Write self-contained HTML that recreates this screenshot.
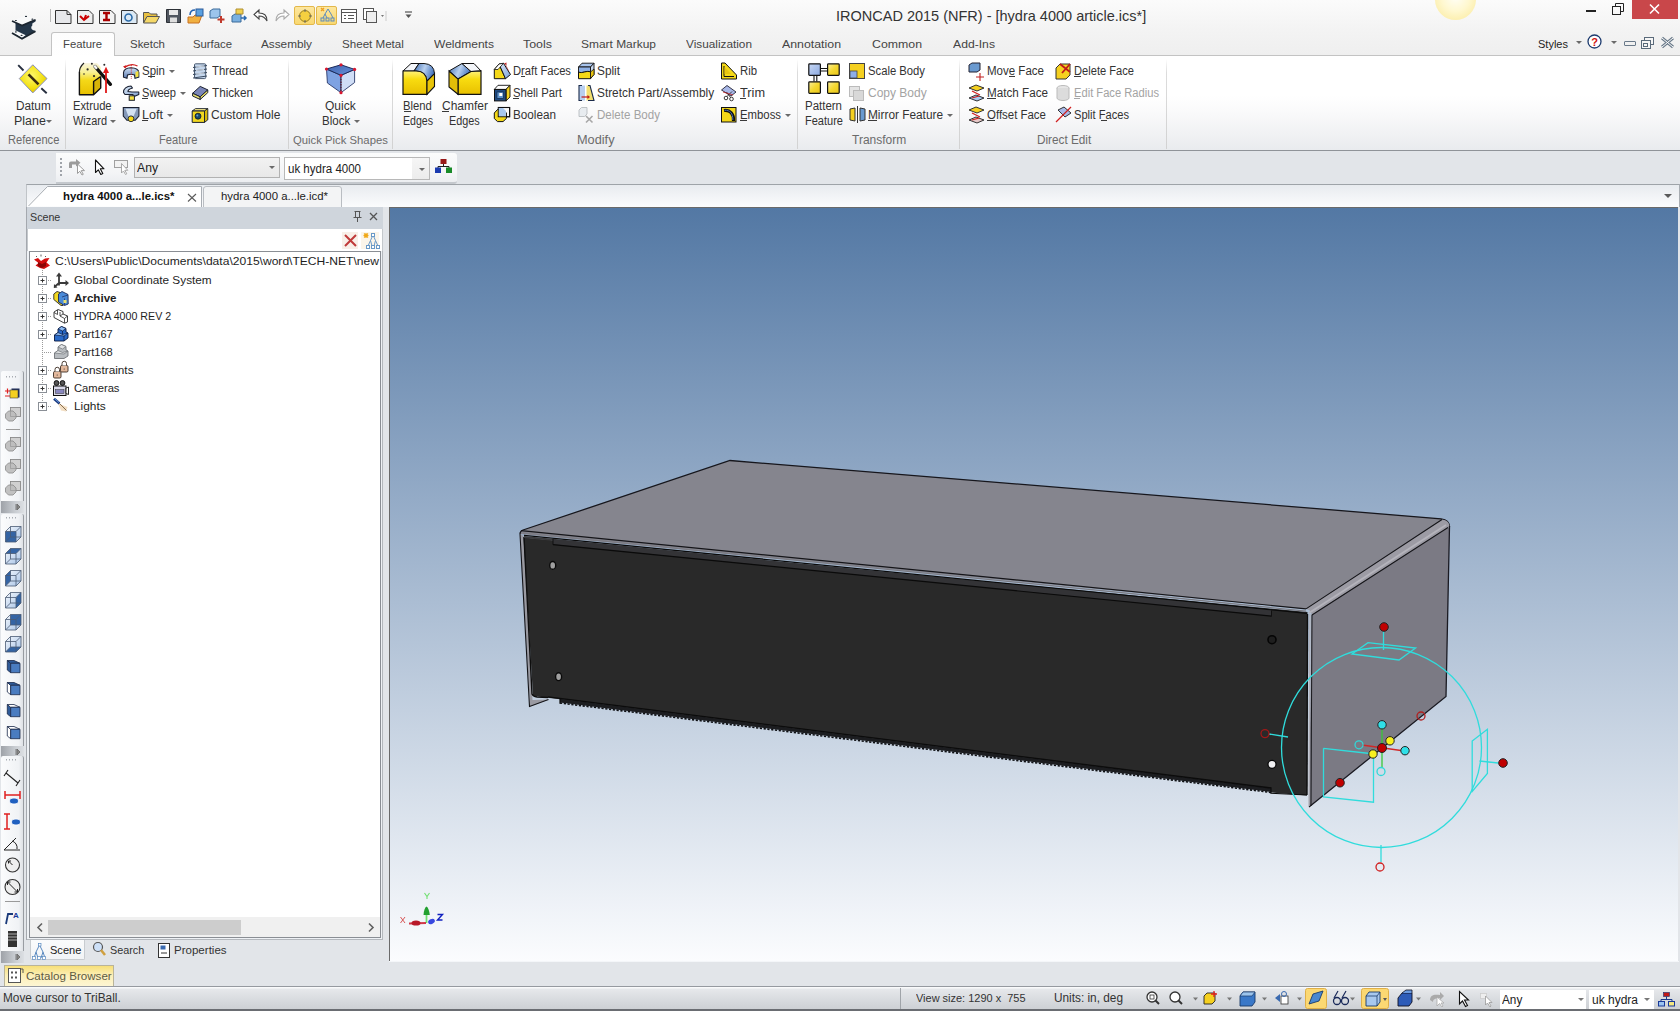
<!DOCTYPE html>
<html><head><meta charset="utf-8">
<style>
*{margin:0;padding:0;box-sizing:border-box}
html,body{width:1680px;height:1011px;overflow:hidden;background:#e2e5e9;font-family:"Liberation Sans",sans-serif;font-size:12px;color:#1e1e1e}
.a{position:absolute}
svg{position:absolute;overflow:visible}
.t{position:absolute;white-space:nowrap;line-height:14px}
#title{left:0;top:0;width:1680px;height:31px;background:linear-gradient(#fbfbfb,#f3f3f3)}
#tabs{left:0;top:31px;width:1680px;height:25px;background:linear-gradient(#f3f3f3,#efefef);border-bottom:1px solid #c3c3c3}
#ribbon{left:0;top:56px;width:1680px;height:95px;background:linear-gradient(#ffffff 0%,#ffffff 42%,#f9f9fa 62%,#f0f1f3 84%,#e9ebee 100%);border-bottom:1px solid #8f9398}
.sep{position:absolute;top:59px;width:1px;height:90px;background:linear-gradient(rgba(225,225,225,0),#dcdcdc 15%,#d2d2d2)}
.glab{position:absolute;top:133px;color:#6b6b6b;white-space:nowrap;line-height:14px}
.tab{position:absolute;top:37px;color:#454545;white-space:nowrap;font-size:12px;line-height:14px}
.rl{position:absolute;white-space:nowrap;line-height:14px;color:#333}
.dis{color:#a3a3a3}
.dd{position:absolute;width:0;height:0;border-left:3px solid transparent;border-right:3px solid transparent;border-top:3px solid #6a6a6a}
#viewport{left:389px;top:207px;width:1289px;height:754px;background:linear-gradient(#5378a4,#fbfcfe);border-left:1px solid #6a6a6a;border-top:1px solid #6a6a6a}
#status{left:0;top:986px;width:1680px;height:25px;background:linear-gradient(#f9fafb 0px,#f9fafb 1px,#e6e8eb 2px,#d6d9dd 60%,#cbced2 100%);border-top:1px solid #969aa0}
</style></head>
<body>
<!-- ===== TITLE BAR ===== -->
<div class="a" id="title"></div>
<div class="a" style="left:1435px;top:-21px;width:41px;height:41px;border-radius:50%;background:radial-gradient(circle at 50% 45%,#fffef6 0%,#fff8d0 45%,#fcefb0 75%,#f6e394 92%,rgba(246,230,160,.4) 100%)"></div>
<!-- app logo -->
<svg style="left:0;top:0;z-index:5" width="40" height="42">
 <path d="M15.5 22.5 L22 25 L35.5 19.5 L35.5 21.5 L32.3 23.5 L32.3 25.5 A2.6 2.6 0 0 0 33.5 30.2 L35.5 31 L22 38.5 L15.5 35 Z" fill="#243648"/>
 <path d="M12 21 L25.7 15.3 L35.5 19.6 L22 25 Z" fill="#f8f9fa"/>
 <path d="M12 21 L22 25.6 L35.5 19.8" stroke="#1c2630" stroke-width="1.7" fill="none" stroke-linejoin="round"/>
 <path d="M12 32.5 L15.9 30.6 L25.7 35.3 L21.9 38 Z" fill="#f8f9fa"/>
 <path d="M12 33 L22 38.8 L35.5 31.2" stroke="#1c2630" stroke-width="1.8" fill="none" stroke-linejoin="round"/>
 <g fill="#1c2630"><ellipse cx="26" cy="16.4" rx="1.1" ry=".6"/><ellipse cx="15.9" cy="20.5" rx="1.1" ry=".6"/><ellipse cx="32.4" cy="19.2" rx="1" ry=".6"/><ellipse cx="15.9" cy="31.9" rx="1" ry=".6"/><ellipse cx="21.6" cy="35.3" rx="1.1" ry=".6"/></g>
</svg>
<div class="a" style="left:50px;top:9px;width:1px;height:13px;background:#b8b8b8"></div>
<!-- QAT icons -->
<svg style="left:55px;top:10px" width="17" height="14"><path d="M0.5 0.5H12L16 4.5V13.5H0.5Z" fill="#e6e7ea" stroke="#333" stroke-width="1"/><path d="M12 0.5V4.5H16" fill="none" stroke="#333"/></svg>
<svg style="left:77px;top:10px" width="17" height="14"><path d="M0.5 0.5H12L16 4.5V13.5H0.5Z" fill="#eee" stroke="#333"/><path d="M3 6 L7 10 L12 6 M7 10 L9 5" stroke="#c00" stroke-width="2" fill="none"/></svg>
<svg style="left:99px;top:10px" width="17" height="14"><path d="M0.5 0.5H12L16 4.5V13.5H0.5Z" fill="#f3f3f3" stroke="#333"/><path d="M4 3H11M4 10H11M7.5 3V10" stroke="#a00" stroke-width="2.4" fill="none"/></svg>
<svg style="left:121px;top:10px" width="17" height="14"><path d="M0.5 0.5H12L16 4.5V13.5H0.5Z" fill="#dbe9f5" stroke="#333"/><circle cx="7.5" cy="7.5" r="3.5" fill="none" stroke="#2a6aa8" stroke-width="1.6"/></svg>
<svg style="left:143px;top:10px" width="17" height="14"><path d="M0.5 2.5H6L7.5 4H14V7H4L0.5 13Z" fill="#e8c040" stroke="#555"/><path d="M0.5 13L4 6.5H16.5L13 13Z" fill="#f5d868" stroke="#555"/></svg>
<svg style="left:166px;top:9px" width="15" height="14"><path d="M0.5 0.5H14.5V13.5H0.5Z" fill="#50565f" stroke="#2c3036"/><rect x="3" y="1" width="9" height="5" fill="#e8e8e8"/><rect x="4" y="8.5" width="7" height="5" fill="#dedede"/></svg>
<svg style="left:187px;top:8px" width="17" height="16"><path d="M1 9 L6 9 L8 7 L15 7 L12 15 L1 15Z" fill="#f0b040" stroke="#c87020"/><rect x="9" y="1" width="7" height="7" fill="#5aa0e0" stroke="#2a5a9a"/><path d="M3 7 Q3 2 8 2" stroke="#2060b0" stroke-width="1.5" fill="none"/></svg>
<svg style="left:209px;top:8px" width="17" height="16"><path d="M1 3 L4 1 L11 1 L11 8 L8 10 L1 10Z" fill="#9cc4ec" stroke="#3a6a9a"/><path d="M12 8 V15 M8.5 11.5 H15.5" stroke="#c0392b" stroke-width="2"/></svg>
<svg style="left:231px;top:8px" width="17" height="16"><path d="M1 8 L4 6 L10 6 L10 14 L1 14Z" fill="#7ab0e0" stroke="#3a6a9a"/><path d="M5 1 H12 V6 H5Z" fill="#f0d050" stroke="#b09030"/><path d="M10 10 H15 M13 8 L15 10 L13 12" stroke="#2a6ab0" stroke-width="1.5" fill="none"/></svg>
<svg style="left:253px;top:9px" width="16" height="13"><path d="M6 1 L1 5.5 L6 10 V7 C10 7 12 8 14 12 C14 6 11 4 6 4Z" fill="#fff" stroke="#444" stroke-width="1.1"/></svg>
<svg style="left:274px;top:9px" width="16" height="13"><path d="M10 1 L15 5.5 L10 10 V7 C6 7 4 8 2 12 C2 6 5 4 10 4Z" fill="#fff" stroke="#aaa" stroke-width="1.1"/></svg>
<div class="a" style="left:294px;top:6px;width:21px;height:19px;background:linear-gradient(#fde7a0,#f9d870);border:1px solid #e3b84a;border-radius:2px"></div>
<svg style="left:297px;top:8px" width="16" height="16"><circle cx="8" cy="8" r="5.5" fill="#f5d040" stroke="#9a8020"/><path d="M8 1 V4 M8 12 V15 M1 8 H4 M12 8 H15" stroke="#6a6a6a"/></svg>
<div class="a" style="left:316px;top:6px;width:21px;height:19px;background:linear-gradient(#fde7a0,#f9d870);border:1px solid #e3b84a;border-radius:2px"></div>
<svg style="left:319px;top:7px" width="16" height="17"><path d="M9 2 L6 7 L4 11 M9 2 L12 7 L14 11 M6 7 L8 11" stroke="#5a8ac0" fill="none"/><rect x="2" y="11" width="3" height="3" fill="none" stroke="#5a8ac0"/><rect x="7" y="11" width="3" height="3" fill="none" stroke="#5a8ac0"/><rect x="12" y="11" width="3" height="3" fill="none" stroke="#5a8ac0"/><path d="M2 1 L5 4 M5 1 L2 4" stroke="#f0a020" stroke-width="1.3"/></svg>
<svg style="left:341px;top:9px" width="16" height="14"><rect x="0.5" y="0.5" width="15" height="13" fill="#fff" stroke="#555"/><path d="M0.5 3.5H15.5" stroke="#555"/><path d="M3 6.5H5M7 6.5H13M3 9.5H5M7 9.5H13" stroke="#555"/></svg>
<svg style="left:363px;top:8px" width="24" height="16"><rect x="0.5" y="0.5" width="10" height="11" fill="#fff" stroke="#555"/><rect x="3.5" y="3.5" width="10" height="11" fill="#eee" stroke="#555"/><path d="M18 7 L21 7 L19.5 9Z" fill="#777"/><path d="M23 3V13" stroke="#ccc"/></svg>
<svg style="left:404px;top:11px" width="9" height="9"><path d="M1 1H8" stroke="#555" stroke-width="1.2"/><path d="M1.5 3.5H7.5L4.5 7Z" fill="#555"/></svg>
<div class="t" style="left:836px;top:8px;font-size:14.5px;line-height:17px;color:#333">IRONCAD 2015 (NFR) - [hydra 4000 article.ics*]</div>
<!-- window buttons -->
<div class="a" style="left:1586px;top:10px;width:10px;height:2px;background:#222"></div>
<svg style="left:1612px;top:3px" width="12" height="12"><rect x="0.5" y="3.5" width="8" height="8" fill="none" stroke="#222"/><path d="M3.5 3.5V0.5H11.5V8.5H8.5" fill="none" stroke="#222"/></svg>
<div class="a" style="left:1632px;top:0px;width:46px;height:19px;background:#c9474a"></div>
<svg style="left:1649px;top:4px" width="11" height="10"><path d="M1 0.5 L10 9.5 M10 0.5 L1 9.5" stroke="#fff" stroke-width="1.6"/></svg>

<!-- ===== RIBBON TABS ===== -->
<div class="a" id="tabs"></div>
<div class="a" style="left:51px;top:32px;width:64px;height:25px;background:linear-gradient(#fdfdfd,#ffffff);border:1px solid #c3c3c3;border-bottom:none;border-radius:3px 3px 0 0"></div>
<div class="tab" style="left:63px;font-size:11.6px;transform:scaleX(0.976);transform-origin:0 0">Feature</div>
<div class="tab" style="left:130px;font-size:11.6px;transform:scaleX(0.987);transform-origin:0 0">Sketch</div>
<div class="tab" style="left:193px;font-size:11.6px;transform:scaleX(0.976);transform-origin:0 0">Surface</div>
<div class="tab" style="left:261px;font-size:11.6px;transform:scaleX(1.015);transform-origin:0 0">Assembly</div>
<div class="tab" style="left:342px;font-size:11.6px">Sheet Metal</div>
<div class="tab" style="left:434px;font-size:11.6px;transform:scaleX(1.038);transform-origin:0 0">Weldments</div>
<div class="tab" style="left:523px;font-size:11.6px;transform:scaleX(1.071);transform-origin:0 0">Tools</div>
<div class="tab" style="left:581px;font-size:11.8px;transform:scaleX(1.012);transform-origin:0 0">Smart Markup</div>
<div class="tab" style="left:686px;font-size:11.6px;transform:scaleX(1.017);transform-origin:0 0">Visualization</div>
<div class="tab" style="left:782px;font-size:11.6px;transform:scaleX(1.064);transform-origin:0 0">Annotation</div>
<div class="tab" style="left:872px;font-size:11.6px;transform:scaleX(1.063);transform-origin:0 0">Common</div>
<div class="tab" style="left:953px;font-size:11.6px;transform:scaleX(1.051);transform-origin:0 0">Add-Ins</div>
<div class="tab" style="left:1538px;font-size:11.6px;color:#222;transform:scaleX(0.950);transform-origin:0 0">Styles</div>
<div class="dd" style="left:1576px;top:41px"></div>
<svg style="left:1587px;top:34px" width="15" height="15"><circle cx="7.5" cy="7.5" r="6.5" fill="#fff" stroke="#1d3b6e" stroke-width="1.3"/><text x="7.5" y="11.5" font-size="11" font-weight="bold" fill="#d01010" text-anchor="middle" font-family="Liberation Sans">?</text></svg>
<div class="dd" style="left:1611px;top:41px"></div>
<div class="a" style="left:1624px;top:41px;width:12px;height:5px;border:1px solid #6a7a8a;border-radius:1px"></div>
<svg style="left:1641px;top:37px" width="13" height="12"><rect x="3.5" y="0.5" width="9" height="7" fill="#f6f6f6" stroke="#5a6a7a"/><rect x="0.5" y="3.5" width="9" height="8" fill="#f6f6f6" stroke="#5a6a7a"/><rect x="2.5" y="6.5" width="4" height="3" fill="none" stroke="#5a6a7a"/></svg>
<svg style="left:1661px;top:37px" width="13" height="11"><path d="M1 1 L12 10 M12 1 L1 10" stroke="#6a7a8a" stroke-width="3"/><path d="M1 1 L12 10 M12 1 L1 10" stroke="#fff" stroke-width="1"/></svg>

<!-- ===== RIBBON ===== -->
<div class="a" id="ribbon"></div>
<div class="a" style="left:52px;top:55px;width:62px;height:2px;background:#fff"></div>

<div class="sep" style="left:65px"></div>
<div class="sep" style="left:288px"></div>
<div class="sep" style="left:392px"></div>
<div class="sep" style="left:797px"></div>
<div class="sep" style="left:959px"></div>
<div class="sep" style="left:1166px"></div>
<div class="glab" style="left:8px;transform:scaleX(0.928);transform-origin:0 0">Reference</div>
<div class="glab" style="left:159px;transform:scaleX(0.928);transform-origin:0 0">Feature</div>
<div class="glab" style="left:293px;font-size:11.6px;transform:scaleX(0.975);transform-origin:0 0">Quick Pick Shapes</div>
<div class="glab" style="left:577px;transform:scaleX(1.061);transform-origin:0 0">Modify</div>
<div class="glab" style="left:852px">Transform</div>
<div class="glab" style="left:1037px;transform:scaleX(0.980);transform-origin:0 0">Direct Edit</div>

<!-- Datum plane -->
<svg style="left:0;top:0" width="60" height="100">
 <defs><radialGradient id="dp" cx=".45" cy=".4" r=".7"><stop offset="0" stop-color="#fff870"/><stop offset=".6" stop-color="#f2e010"/><stop offset="1" stop-color="#d8b800"/></radialGradient></defs>
 <path d="M18.2 65.1 L23.5 70.5 M41.3 88.2 L46.7 93.2" stroke="#283040" stroke-width="1.9"/>
 <path d="M32.8 64.8 L47 78.6 L32.8 92.9 L19.3 78.6Z" fill="url(#dp)" stroke="#8a90c0" stroke-width="1"/>
 <path d="M28.5 74.4 L38.5 84.3" stroke="#3a2c10" stroke-width="2.6"/>
</svg>
<div class="rl" style="left:16px;top:99px;transform:scaleX(0.982);transform-origin:0 0">Datum</div>
<div class="rl" style="left:14px;top:114px;transform:scaleX(1.036);transform-origin:0 0">Plane</div><div class="dd" style="left:46px;top:120px"></div>
<!-- Extrude wizard -->
<svg style="left:0;top:0" width="120" height="100">
 <defs><linearGradient id="ew" x1="0" y1="0" x2="0" y2="1"><stop offset="0" stop-color="#f8f4e0"/><stop offset=".3" stop-color="#f8f090"/><stop offset=".55" stop-color="#f4d818"/><stop offset="1" stop-color="#e8c000"/></linearGradient></defs>
 <path d="M79.4 68 L84 63 L97 63 L100.7 67 L100.7 88 L93.6 94.7 L79.4 94.7 Z" fill="url(#ew)"/>
 <path d="M93.6 81.5 L100.7 76.5 L100.7 88 L93.6 94.7 Z" fill="#d8b408"/>
 <path d="M79.4 72 V94.7 H93.6 L100.7 88 V76.5 M93.6 94.7 V81.5 L100.7 76.5" stroke="#111" stroke-width="1.4" fill="none" stroke-linejoin="round"/>
 <path d="M79.4 72 Q79.5 67 84 63" stroke="#222" stroke-width="1.2" fill="none"/>
 <g fill="#2a2a2a"><circle cx="87.6" cy="69.4" r="1.1"/><circle cx="94" cy="76.1" r="1.1"/><circle cx="104.3" cy="64.8" r="1"/><circle cx="91.9" cy="63.7" r="1"/><circle cx="84" cy="74" r=".8"/></g>
 <path d="M95 66.5 L110.4 84.3" stroke="#111" stroke-width="3.4" stroke-linecap="round"/>
 <path d="M94.2 65.6 L97 68.8" stroke="#f8f8f8" stroke-width="2.4"/>
 <path d="M106 93 V71" stroke="#e01818" stroke-width="1.8"/>
 <path d="M103 73 L106 66.8 L109 73Z" fill="#e01818"/>
</svg>
<div class="rl" style="left:73px;top:99px;transform:scaleX(0.933);transform-origin:0 0">Extrude</div>
<div class="rl" style="left:73px;top:114px;transform:scaleX(0.910);transform-origin:0 0">Wizard</div><div class="dd" style="left:110px;top:120px"></div>

<!-- small col 1 -->
<svg style="left:0;top:0" width="300" height="130">
 <defs><linearGradient id="bg1" x1="0" y1="0" x2="0" y2="1"><stop offset="0" stop-color="#cfe0f4"/><stop offset="1" stop-color="#5a7ab0"/></linearGradient>
 <linearGradient id="bg2" x1="0" y1="0" x2="1" y2="1"><stop offset="0" stop-color="#e0ecf8"/><stop offset="1" stop-color="#7a9acb"/></linearGradient></defs>
 <!-- spin -->
 <path d="M123.5 72.5 Q124 68 131 67.8 Q138.5 68 138.8 72.5 L138.8 77.2 L135 78.2 L134.5 75 Q131 73.5 127.5 75 L127 78.2 L123.5 77.2 Z" fill="url(#bg1)" stroke="#1a2030" stroke-width="1.1"/>
 <path d="M135.5 72 L138.5 71 L138.5 76.5 L135.5 77.5Z" fill="#f5e040"/>
 <path d="M124.5 67.5 Q131 62.5 137.5 66" stroke="#d02020" stroke-width="1.3" fill="none"/>
 <path d="M123 66.5 L126.5 65 L125.5 68.5Z" fill="#d02020"/>
 <path d="M131.3 65 V79" stroke="#d02020" stroke-width=".8" stroke-dasharray="1.2 1"/>
 <!-- sweep -->
 <path d="M131 86 C127 86 123 89 123.5 92.5 L125 94.5 L133 94.5 L133 97 L138.8 94.5 L138.8 92 L132 92 L128 91.5 C128 89 131 88.5 132.5 88 Z" fill="url(#bg2)" stroke="#1a2030" stroke-width="1.1" stroke-linejoin="round"/>
 <rect x="129.2" y="95.8" width="5.2" height="4.5" fill="#f5e040" stroke="#1a2030" stroke-width="1"/>
 <!-- loft -->
 <path d="M123.3 107.5 H138.9 V116 L135.2 120.3 H126.9 L123.3 116 Z" fill="#8498b8" stroke="#1a2030" stroke-width="1.1"/>
 <path d="M125.5 108.8 H136.7 L133.5 116.5 H128.5 Z" fill="#d4e2f2"/>
 <circle cx="131" cy="118.8" r="2.9" fill="#f5d818" stroke="#1a2030" stroke-width=".9"/>
 <!-- thread -->
 <rect x="194.5" y="63.8" width="11.2" height="14.8" rx="1" fill="#c4d6ec" stroke="#4a5a70" stroke-width="1"/>
 <path d="M193 67.5 L207 65.5 M193 71 L207 69 M193 74.5 L207 72.5 M193 78 L207 76" stroke="#3a4a60" stroke-width="1"/>
 <path d="M196 67 L204 66 M196 70.5 L204 69.5 M196 74 L204 73" stroke="#f4f8fc" stroke-width=".8"/>
 <!-- thicken -->
 <path d="M192.6 93.3 L200.2 86.4 L207.8 89.9 L200.2 96.8 Z" fill="#7a86b8" stroke="#1a2030" stroke-width="1"/>
 <path d="M192.6 93.3 L200.2 96.8 L200.2 99.5 L192.6 96 Z" fill="#e8e070" stroke="#1a2030" stroke-width="1"/>
 <path d="M200.2 96.8 L207.8 89.9 L207.8 92.6 L200.2 99.5 Z" fill="#f0e468" stroke="#1a2030" stroke-width="1"/>
 <!-- custom hole -->
 <path d="M192.2 111 L195.5 108.6 L207.8 108.6 L204.5 111 Z" fill="#f8ec90" stroke="#1a2030" stroke-width=".9"/>
 <path d="M192.2 111 H204.5 V122.4 H192.2 Z" fill="#f2d820" stroke="#1a2030" stroke-width="1"/>
 <path d="M204.5 111 L207.8 108.6 V119.8 L204.5 122.4 Z" fill="#d8b808" stroke="#1a2030" stroke-width=".9"/>
 <circle cx="198" cy="116.2" r="3" fill="#1a4a6a" stroke="#101820" stroke-width=".8"/>
 <circle cx="197.3" cy="115.6" r="1" fill="#6aa0c8"/>
</svg>
<div class="rl" style="left:142px;top:64px;transform:scaleX(0.957);transform-origin:0 0">Spin</div><div class="dd" style="left:169px;top:70px"></div>
<div class="rl" style="left:142px;top:86px;transform:scaleX(0.926);transform-origin:0 0">Sweep</div><div class="dd" style="left:180px;top:92px"></div>
<div class="rl" style="left:142px;top:108px;transform:scaleX(1.049);transform-origin:0 0">Loft</div><div class="dd" style="left:167px;top:114px"></div>
<div class="rl" style="left:212px;top:64px;transform:scaleX(0.947);transform-origin:0 0">Thread</div>
<div class="rl" style="left:212px;top:86px;transform:scaleX(0.975);transform-origin:0 0">Thicken</div>
<div class="rl" style="left:211px;top:108px">Custom Hole</div>

<!-- quick block -->
<svg style="left:0;top:0" width="400" height="100">
 <defs><linearGradient id="qbt" x1="0" y1="0" x2="1" y2="1"><stop offset="0" stop-color="#3e64b0"/><stop offset="1" stop-color="#6a90d8"/></linearGradient></defs>
 <path d="M326.5 69 L341 75.3 L341 92.7 L327.4 83 Z" fill="#7ea2e2" stroke="#2a3a6a" stroke-width=".9"/>
 <path d="M341 75.3 L354.6 69.4 L354.6 82.5 L341 92.7 Z" fill="#d0def6" stroke="#2a3a6a" stroke-width=".9"/>
 <path d="M326.5 69 L341 64.8 L354.6 69.4 L341 75.3 Z" fill="url(#qbt)" stroke="#1a2a5a" stroke-width="1"/>
 <path d="M341 76 V92" stroke="#5a1020" stroke-width="1.1" stroke-dasharray="1.5 1.2"/>
 <g fill="#d81830"><circle cx="326.5" cy="69" r="1.6"/><circle cx="341" cy="64.8" r="1.6"/><circle cx="354.6" cy="69.4" r="1.6"/><circle cx="341" cy="75.3" r="1.6"/><circle cx="341" cy="92.7" r="1.6"/></g>
</svg>
<div class="rl" style="left:325px;top:99px">Quick</div>
<div class="rl" style="left:322px;top:114px;transform:scaleX(0.961);transform-origin:0 0">Block</div><div class="dd" style="left:354px;top:120px"></div>

<!-- blend / chamfer -->
<svg style="left:0;top:0" width="500" height="100">
 <defs><linearGradient id="bl" x1="0" y1="0" x2="1" y2="0.3"><stop offset="0" stop-color="#3a68b0"/><stop offset=".55" stop-color="#b8d0ee"/><stop offset="1" stop-color="#4a78c0"/></linearGradient>
 <linearGradient id="yl" x1="0" y1="0" x2="0" y2="1"><stop offset="0" stop-color="#fff27a"/><stop offset=".35" stop-color="#f8dc10"/><stop offset="1" stop-color="#e8c000"/></linearGradient></defs>
 <path d="M403 71 L411 63.5 L419 63.5 L414 71 Z" fill="#f4f6fa" stroke="#111" stroke-width="1"/>
 <path d="M414 71 L419 63.5 L424 63.5 Q434 64 434.5 73.5 L427 81 Q426 71 416 71 Z" fill="url(#bl)" stroke="#111" stroke-width="1"/>
 <path d="M403 71 L416 71 Q426 71 427 81 L427 94.3 L403 94.3 Z" fill="url(#yl)" stroke="#111" stroke-width="1.2"/>
 <path d="M427 81 L434.5 73.5 L434.5 86.5 L427 94.3 Z" fill="#e8c408" stroke="#111" stroke-width="1.1"/>
 <path d="M449 71 L462 63.5 L471 71.5 L458 79 Z" fill="url(#bl)" stroke="#111" stroke-width="1"/>
 <path d="M462 63.5 L474 63.5 L481 71 L471 71.5 Z" fill="#f4f6fa" stroke="#111" stroke-width="1"/>
 <path d="M458 79 L471 71.5 L481 71 L481 94.3 L458 94.3 Z" fill="url(#yl)" stroke="#111" stroke-width="1.2"/>
 <path d="M449 71 L458 79 L458 94.3 L449 87 Z" fill="#e2be08" stroke="#111" stroke-width="1.1"/>
</svg>
<div class="rl" style="left:403px;top:99px;transform:scaleX(0.938);transform-origin:0 0">Blend</div>
<div class="rl" style="left:403px;top:114px;transform:scaleX(0.884);transform-origin:0 0">Edges</div>
<div class="rl" style="left:442px;top:99px">Chamfer</div>
<div class="rl" style="left:449px;top:114px;transform:scaleX(0.902);transform-origin:0 0">Edges</div>

<!-- modify small icons -->
<svg style="left:0;top:0" width="800" height="130">
 <defs><linearGradient id="lb" x1="0" y1="0" x2="1" y2="1"><stop offset="0" stop-color="#dce8f8"/><stop offset="1" stop-color="#7aa0d8"/></linearGradient></defs>
 <!-- draft faces -->
 <path d="M494.3 69.5 L499 64 L505.5 78.7 H494.3Z" fill="#f4d818" stroke="#111" stroke-width="1"/>
 <path d="M499 64 L503.5 63.3 L510.5 74.5 L505.5 78.7Z" fill="url(#lb)" stroke="#111" stroke-width="1"/>
 <path d="M494.3 69.5 L499 64 L503.5 63.3 L498 69.5Z" fill="#fff" stroke="#111" stroke-width=".8"/>
 <path d="M508.5 70.5 L505.5 64.5" stroke="#c02828" stroke-width=".9" stroke-dasharray="1.2 1"/>
 <path d="M504 63.5 L506.5 62.5 L506.5 65.5Z" fill="#c02828"/>
 <!-- shell part -->
 <path d="M494.3 89.4 L498 85.3 H510 L506 89.4Z" fill="#fff" stroke="#111" stroke-width=".9"/>
 <path d="M506 89.4 L510 85.3 V97 L506 100.9Z" fill="#f0d020" stroke="#111" stroke-width=".9"/>
 <rect x="494.5" y="89.5" width="11.5" height="11.4" fill="#1e4a80" stroke="#111" stroke-width="1"/>
 <rect x="497" y="92" width="6.5" height="6.3" fill="#5a90c8" stroke="#0a2040" stroke-width=".6"/>
 <rect x="499.3" y="93" width="3" height="3" fill="#fff"/>
 <!-- boolean -->
 <path d="M497.5 109.5 H503 L506.4 113 V118.5 L503 121.6 H497.5 L494.3 118.5 V113Z" fill="#f4d818" stroke="#111" stroke-width="1"/>
 <rect x="498.3" y="107.5" width="11.3" height="9.2" fill="none" stroke="#111" stroke-width="1.1"/>
 <path d="M498.8 108 H503 L506 111 V116.2 H498.8Z" fill="#a8c8f0"/>
 <path d="M498.3 107.5 H509.6 V116.7 H506.4" fill="none" stroke="#111" stroke-width="1.1"/>
 <!-- split -->
 <path d="M578.5 67 L582 63.2 H594 L590.5 67Z" fill="#a8c4ec" stroke="#111" stroke-width=".9"/>
 <path d="M578.5 67 H590.5 V72 C587 70 582 74 578.5 72Z" fill="#8eb0e4" stroke="#111" stroke-width=".9"/>
 <path d="M578.5 72 C582 74 587 70 590.5 72 V78.7 H578.5Z" fill="#f4d818" stroke="#111" stroke-width="1"/>
 <path d="M590.5 67 L594 63.2 V74.5 L590.5 78.7Z" fill="#c8d8f0" stroke="#111" stroke-width=".9"/>
 <path d="M590.5 72 L594 69 V74.5 L590.5 78.7Z" fill="#e8c410" stroke="#111" stroke-width=".8"/>
 <!-- stretch -->
 <rect x="579" y="85.5" width="6" height="15" fill="#b8cff0"/>
 <path d="M586.5 85.5 H590 L594 100.5 H586.5Z" fill="#f4e070"/>
 <path d="M582 85.5 H579 V100.5 H582 M588 85.5 H590 L594 100.5 H588" fill="none" stroke="#1a2a4a" stroke-width="1.1"/>
 <path d="M581.5 97 H588" stroke="#c01818" stroke-width="1.2"/>
 <path d="M587.5 95 L590 97 L587.5 99Z" fill="#c01818"/>
 <!-- delete body dis -->
 <path d="M579 110 L581.5 107.5 H587 V114 L584.5 116.5 H579Z" fill="#e8ecf0" stroke="#b8bcc0" stroke-width=".9"/>
 <path d="M586 116 L592.5 122.5 M592.5 116 L586 122.5" stroke="#a8a8a8" stroke-width="1.6"/>
 <!-- rib -->
 <path d="M721.5 63 L725 63 L736.5 75 V79 H721.5Z" fill="#f4d818" stroke="#111" stroke-width="1"/>
 <path d="M724 66 L724 76.5 H734" fill="none" stroke="#111" stroke-width="1"/>
 <path d="M724.5 67 L731 74 H724.5Z" fill="#e8c410"/>
 <!-- trim -->
 <path d="M721.5 90 L727 85.5 L736 92 L731 96Z" fill="#a8b8e8" stroke="#223" stroke-width=".9"/>
 <circle cx="726" cy="98" r="1.8" fill="#fff" stroke="#222" stroke-width=".9"/><circle cx="731.5" cy="99" r="1.8" fill="#fff" stroke="#222" stroke-width=".9"/>
 <path d="M727 96.5 L732 91.5 M730.5 97.5 L726.5 92" stroke="#222" stroke-width=".8"/>
 <path d="M723 92 L733 95" stroke="#c02020" stroke-width=".8"/>
 <!-- emboss -->
 <rect x="721.5" y="107.5" width="14.5" height="14.5" fill="#f4d818" stroke="#111" stroke-width="1"/>
 <path d="M724 110.5 C730 109.5 734 114 733.5 121" stroke="#111" stroke-width="3.2" fill="none"/>
 <path d="M724.5 110.3 C730 109.8 733 113.5 732.8 120" stroke="#4a70b8" stroke-width="1" fill="none"/>
</svg>
<div class="rl" style="left:513px;top:64px;transform:scaleX(0.935);transform-origin:0 0">Draft Faces</div>
<div class="rl" style="left:513px;top:86px;transform:scaleX(0.942);transform-origin:0 0">Shell Part</div>
<div class="rl" style="left:513px;top:108px;transform:scaleX(0.976);transform-origin:0 0">Boolean</div>
<div class="rl" style="left:597px;top:64px;transform:scaleX(0.985);transform-origin:0 0">Split</div>
<div class="rl" style="left:597px;top:86px;transform:scaleX(0.986);transform-origin:0 0">Stretch Part/Assembly</div>
<div class="rl dis" style="left:597px;top:108px;transform:scaleX(0.964);transform-origin:0 0">Delete Body</div>
<div class="rl" style="left:740px;top:64px;transform:scaleX(0.944);transform-origin:0 0">Rib</div>
<div class="rl" style="left:740px;top:86px;transform:scaleX(1.062);transform-origin:0 0">Trim</div>
<div class="rl" style="left:740px;top:108px;transform:scaleX(0.946);transform-origin:0 0">Emboss</div><div class="dd" style="left:785px;top:114px"></div>

<!-- transform -->
<svg style="left:0;top:0" width="1000" height="130">
 <defs><linearGradient id="py" x1="0" y1="0" x2="1" y2="1"><stop offset="0" stop-color="#fbf0a0"/><stop offset=".5" stop-color="#f4d830"/><stop offset="1" stop-color="#e8c418"/></linearGradient>
 <linearGradient id="pb" x1="0" y1="0" x2="1" y2="1"><stop offset="0" stop-color="#c8d8f4"/><stop offset="1" stop-color="#8aa8e0"/></linearGradient></defs>
 <path d="M820.5 68.5 H827.5 M820.5 71 H827.5 M814 75.5 V81.6 M816.8 75.5 V81.6" stroke="#111" stroke-width="1.1"/>
 <rect x="808.8" y="63.8" width="11.6" height="11.6" rx=".8" fill="url(#pb)" stroke="#111" stroke-width="1.2"/>
 <rect x="827.6" y="63.8" width="11.6" height="11.6" rx=".8" fill="url(#py)" stroke="#111" stroke-width="1.2"/>
 <rect x="808.8" y="81.8" width="11.6" height="11.6" rx=".8" fill="url(#py)" stroke="#111" stroke-width="1.2"/>
 <rect x="827.6" y="81.8" width="11.6" height="11.6" rx=".8" fill="url(#py)" stroke="#111" stroke-width="1.2"/>
 <!-- scale body -->
 <rect x="849.5" y="63.5" width="15" height="15" fill="#f5d020" stroke="#444"/>
 <rect x="850" y="71" width="7" height="7" fill="#8eaee8" stroke="#444" stroke-width=".8"/>
 <!-- copy body dis -->
 <rect x="849.5" y="86.5" width="10" height="10" fill="#e4e4e4" stroke="#bbb"/>
 <rect x="853.5" y="90.5" width="10" height="10" fill="#d8d8d8" stroke="#bbb"/>
 <!-- mirror -->
 <path d="M850 109 L855 108 L855 121 L850 120Z" fill="#f5d020" stroke="#333"/>
 <path d="M857.5 106 V123" stroke="#333"/>
 <path d="M860 108 L865 109 L865 120 L860 121Z" fill="#6a9ad0" stroke="#333"/>
 <!-- move face -->
 <path d="M969 65 L972 63 L980 63 L980 70 L977 72 L969 72Z" fill="#6a9ad0" stroke="#223"/>
 <path d="M980 73 V81 M976 77 H984" stroke="#c02020" stroke-width="1.1"/>
 <!-- match face -->
 <path d="M969 88 L976 85 L984 88 L977 91Z" fill="#f5d020" stroke="#333"/>
 <path d="M969 98 L976 95 L984 98 L977 101Z" fill="#a8c8f0" stroke="#333"/>
 <path d="M972 91 L980 95 M979 96 L972 98" stroke="#d02020" stroke-width="1.3"/>
 <!-- offset face -->
 <path d="M969 110 L976 107 L984 110 L977 113Z" fill="#f5d020" stroke="#333"/>
 <path d="M969 120 L976 117 L984 120 L977 123Z" fill="#e8c8c8" stroke="#333"/>
 <path d="M972 113 L980 117 M979 118 L972 120" stroke="#d02020" stroke-width="1.3"/>
 <!-- delete face -->
 <path d="M1056 68 L1060 64 L1070 64 L1070 75 L1066 79 L1056 79Z" fill="#f5d020" stroke="#333"/>
 <path d="M1060 64 L1070 72 M1070 64 L1062 73" stroke="#c01818" stroke-width="1.8"/>
 <!-- edit face radius dis -->
 <ellipse cx="1063" cy="88" rx="6" ry="2.5" fill="#e6e6e6" stroke="#bbb"/>
 <path d="M1057 88 V98 A6 2.5 0 0 0 1069 98 V88" fill="#dcdcdc" stroke="#bbb"/>
 <!-- split faces -->
 <path d="M1058 110 L1064 107 L1071 113 L1065 117Z" fill="#a8b8e8" stroke="#333"/>
 <path d="M1056 122 L1071 107" stroke="#d02020" stroke-width="1.2"/>
</svg>
<div class="rl" style="left:805px;top:99px;transform:scaleX(0.956);transform-origin:0 0">Pattern</div>
<div class="rl" style="left:805px;top:114px;transform:scaleX(0.919);transform-origin:0 0">Feature</div>
<div class="rl" style="left:868px;top:64px;transform:scaleX(0.939);transform-origin:0 0">Scale Body</div>
<div class="rl dis" style="left:868px;top:86px">Copy Body</div>
<div class="rl" style="left:868px;top:108px;transform:scaleX(0.987);transform-origin:0 0">Mirror Feature</div><div class="dd" style="left:947px;top:114px"></div>
<div class="rl" style="left:987px;top:64px;transform:scaleX(0.960);transform-origin:0 0">Move Face</div>
<div class="rl" style="left:987px;top:86px;transform:scaleX(0.973);transform-origin:0 0">Match Face</div>
<div class="rl" style="left:987px;top:108px;transform:scaleX(0.954);transform-origin:0 0">Offset Face</div>
<div class="rl" style="left:1074px;top:64px;transform:scaleX(0.927);transform-origin:0 0">Delete Face</div>
<div class="rl dis" style="left:1074px;top:86px;transform:scaleX(0.930);transform-origin:0 0">Edit Face Radius</div>
<div class="rl" style="left:1074px;top:108px;transform:scaleX(0.927);transform-origin:0 0">Split Faces</div>



<!-- access key underlines -->
<div class="a" style="left:148px;top:76px;width:7px;height:1px;background:#3a3a3a"></div><div class="a" style="left:142px;top:98px;width:6px;height:1px;background:#3a3a3a"></div><div class="a" style="left:142px;top:120px;width:6px;height:1px;background:#3a3a3a"></div><div class="a" style="left:521px;top:76px;width:4px;height:1px;background:#3a3a3a"></div><div class="a" style="left:513px;top:98px;width:6px;height:1px;background:#3a3a3a"></div><div class="a" style="left:404px;top:111px;width:7px;height:1px;background:#3a3a3a"></div><div class="a" style="left:442px;top:111px;width:7px;height:1px;background:#3a3a3a"></div><div class="a" style="left:740px;top:98px;width:6px;height:1px;background:#3a3a3a"></div><div class="a" style="left:740px;top:120px;width:7px;height:1px;background:#3a3a3a"></div><div class="a" style="left:1009px;top:76px;width:6px;height:1px;background:#3a3a3a"></div><div class="a" style="left:1074px;top:76px;width:7px;height:1px;background:#3a3a3a"></div><div class="a" style="left:987px;top:98px;width:9px;height:1px;background:#3a3a3a"></div><div class="a" style="left:987px;top:120px;width:8px;height:1px;background:#3a3a3a"></div><div class="a" style="left:1101px;top:120px;width:6px;height:1px;background:#3a3a3a"></div><div class="a" style="left:868px;top:120px;width:9px;height:1px;background:#3a3a3a"></div><div class="a" style="left:1074px;top:98px;width:6px;height:1px;background:#a8a8a8"></div>
<!-- ===== SELECTION TOOLBAR ===== -->
<div class="a" style="left:56px;top:153px;width:401px;height:31px;background:linear-gradient(#fbfcfc,#f3f4f6 70%,#eceef1);border-bottom:2px solid #c4c8cd;border-radius:0 3px 3px 0"></div>
<div class="a" style="left:60px;top:158px;width:2px;height:20px;background:repeating-linear-gradient(#a0a4aa 0 2px,transparent 2px 4px)"></div>
<svg style="left:0;top:0" width="460" height="190">
 <path d="M69 168 V163.5 Q69 161.5 71 161.5 H76 V159 L80.5 162.8 L76 166.5 V164.5 H72 V168Z" fill="#9c9c9c"/>
 <path d="M77.5 164 V173.5 L79.8 171.3 L82 175 L83.3 174.3 L81.2 170.6 L84.5 170.6Z" fill="#fff" stroke="#9c9c9c" stroke-width="1"/>
 <path d="M95.5 160 V172.5 L98.3 169.8 L100.8 174.5 L102.8 173.5 L100.3 168.8 L104 168.8Z" fill="#fff" stroke="#111" stroke-width="1.1" stroke-linejoin="round"/>
 <rect x="114.5" y="160.5" width="13" height="7" fill="#f2f2f2" stroke="#a0a0a0"/>
 <path d="M121.5 163.5 V173 L123.5 171 L125.5 174.5 L126.8 173.8 L124.8 170.3 L127.8 170.3Z" fill="#fff" stroke="#a0a0a0" stroke-width=".9"/>
</svg>
<div class="a" style="left:134px;top:157px;width:146px;height:21px;background:linear-gradient(#f2f2f2,#e8e8e8);border:1px solid #b2b2b2"></div>
<div class="t" style="left:137px;top:161px;font-size:12.5px;color:#222;transform:scaleX(0.975);transform-origin:0 0">Any</div>
<div class="a" style="left:269px;top:166px;border-left:3px solid transparent;border-right:3px solid transparent;border-top:3px solid #6a6a6a"></div>
<div class="a" style="left:284px;top:157px;width:146px;height:23px;background:#fff;border:1px solid #b8b8b8"></div>
<div class="a" style="left:412px;top:158px;width:17px;height:21px;background:linear-gradient(#f6f6f6,#ececec)"></div>
<div class="t" style="left:288px;top:162px;font-size:12px;color:#222;transform:scaleX(0.960);transform-origin:0 0">uk hydra 4000</div>
<div class="a" style="left:419px;top:168px;border-left:3px solid transparent;border-right:3px solid transparent;border-top:3px solid #6a6a6a"></div>
<svg style="left:435px;top:159px" width="17" height="15"><rect x="5.5" y="0" width="6" height="5" fill="#981818"/><path d="M8.5 5V7.5M3 9V7.5H14V9" stroke="#222" fill="none"/><rect x="0" y="8.5" width="6" height="5.5" fill="#1a3ab0"/><rect x="11" y="8.5" width="6" height="5.5" fill="#188a28"/></svg>

<!-- ===== DOC TABS ===== -->
<div class="a" style="left:26px;top:184px;width:1654px;height:23px;background:linear-gradient(#e8ebef,#fbfcfd);border-top:1px solid #9ea3a8;border-left:1px solid #c0c4c8;border-right:1px solid #a8adb2"></div>
<svg style="left:0;top:0" width="360" height="210">
 <path d="M27 206 L47 186.5 H201.5 V207 Z" fill="#ffffff"/>
 <path d="M28.5 206 L47.5 186.5 H201.5 V207" fill="none" stroke="#a8adb3" stroke-width="1"/>
 <path d="M203.5 207 V189 Q203.5 186.5 206 186.5 H339 Q341.5 186.5 341.5 189 V207" fill="#f3f4f5" stroke="#b9bdc2"/>
 <path d="M188 194 L196 201.5 M196 194 L188 201.5" stroke="#5a5a5a" stroke-width="1.1"/>
</svg>
<div class="t" style="left:63px;top:189px;font-size:11.4px;font-weight:bold;color:#111">hydra 4000 a...le.ics*</div>
<div class="t" style="left:221px;top:189px;font-size:11.4px;color:#222">hydra 4000 a...le.icd*</div>
<div class="a" style="left:1664px;top:194px;border-left:4.5px solid transparent;border-right:4.5px solid transparent;border-top:4.5px solid #5a5a5a"></div>

<!-- ===== SCENE PANEL ===== -->
<div class="a" style="left:27px;top:207px;width:356px;height:22px;background:#cfd5dc"></div>
<div class="t" style="left:30px;top:210px;font-size:11.8px;color:#333;transform:scaleX(0.906);transform-origin:0 0">Scene</div>
<svg style="left:350px;top:210px" width="34" height="14">
 <path d="M4.5 1.5 H10.5 M5.5 1.5 V7.5 H9.5 V1.5 M3.5 7.5 H11.5 M7.5 7.5 V12" stroke="#555" fill="none" stroke-width="1"/>
 <path d="M20 3 L27 10 M27 3 L20 10" stroke="#555" stroke-width="1.3"/>
</svg>
<div class="a" style="left:27px;top:229px;width:356px;height:22px;background:#fff;border-left:1px solid #c4c8cc;border-right:1px solid #c4c8cc"></div>
<div class="a" style="left:342px;top:232px;width:16px;height:17px;background:#f8efe8"></div>
<svg style="left:343px;top:233px" width="15" height="15"><path d="M2 2 L13 13 M13 2 L2 13" stroke="#c03a3a" stroke-width="2"/></svg>
<div class="a" style="left:361px;top:232px;width:18px;height:17px;background:#fbf5ea"></div>
<svg style="left:362px;top:232px" width="18" height="17">
 <path d="M4 1 V6 M1.5 3.5 H6.5 M2 1.5 L6 5.5 M6 1.5 L2 5.5" stroke="#f0a818" stroke-width="1.1"/>
 <path d="M11 3 L8.5 8.5 L6 14 M11 3 L13.5 8.5 L16 14 M8.5 8.5 L10 14 M13.5 8.5 L12 14" stroke="#6a9ac8" fill="none"/>
 <rect x="9.5" y="1.5" width="3" height="3" fill="#fff" stroke="#6a9ac8"/>
 <rect x="4.5" y="13.5" width="3" height="3" fill="#fff" stroke="#6a9ac8"/><rect x="9.5" y="13.5" width="3" height="3" fill="#fff" stroke="#6a9ac8"/><rect x="14.5" y="13.5" width="3" height="3" fill="#fff" stroke="#6a9ac8"/>
</svg>
<!-- tree box -->
<div class="a" style="left:27px;top:251px;width:356px;height:689px;background:#eef1f5;border-right:1px solid #b4b8bd;border-bottom:1px solid #b4b8bd"></div>
<div class="a" style="left:29px;top:251px;width:352px;height:687px;background:#fff;border:1px solid #8a8e94"></div>
<div class="a" style="left:30px;top:917px;width:350px;height:20px;background:#f0f0f0"></div>
<div class="a" style="left:48px;top:920px;width:193px;height:15px;background:#cdcdcd"></div>
<svg style="left:30px;top:915px" width="350" height="25">
 <path d="M12 8.5 L8 12.5 L12 16.5" stroke="#606060" stroke-width="1.6" fill="none"/>
 <path d="M339 8.5 L343 12.5 L339 16.5" stroke="#606060" stroke-width="1.6" fill="none"/>
</svg>
<div class="t" style="left:55px;top:254px;font-size:11.8px;width:326px;overflow:hidden;transform:scaleX(1.023);transform-origin:0 0">C:\Users\Public\Documents\data\2015\word\TECH-NET\new</div>
<svg style="left:0;top:0" width="120" height="420">
 <!-- dotted tree lines -->
 <path d="M42.5 270 V406" stroke="#9a9a9a" stroke-dasharray="1 1"/>
 <path d="M46 280.5 H52 M46 298.5 H52 M46 316.5 H52 M46 334.5 H52 M42 352.5 H52 M46 370.5 H52 M46 388.5 H52 M46 406.5 H52" stroke="#9a9a9a" stroke-dasharray="1 1"/>
 <g fill="#fff" stroke="#8a8f96">
  <rect x="38.5" y="276.5" width="8" height="8"/><rect x="38.5" y="294.5" width="8" height="8"/><rect x="38.5" y="312.5" width="8" height="8"/><rect x="38.5" y="330.5" width="8" height="8"/><rect x="38.5" y="366.5" width="8" height="8"/><rect x="38.5" y="384.5" width="8" height="8"/><rect x="38.5" y="402.5" width="8" height="8"/>
 </g>
 <path d="M40.5 280.5H44.5M42.5 278.5V282.5 M40.5 298.5H44.5M42.5 296.5V300.5 M40.5 316.5H44.5M42.5 314.5V318.5 M40.5 334.5H44.5M42.5 332.5V336.5 M40.5 370.5H44.5M42.5 368.5V372.5 M40.5 388.5H44.5M42.5 386.5V390.5 M40.5 406.5H44.5M42.5 404.5V408.5" stroke="#333"/>
 <!-- root icon -->
 <path d="M34 259.5 L38 258 L41 261 L45 258.5 L49.5 258 L46.5 262.5 L50 265.5 L44 269 L40 268 L35.5 265.5 L38.5 263 Z" fill="#d41010"/>
 <path d="M38 262 L42 264 L46 262 L46 266 L42 268 L38 266Z" fill="#8a0808"/>
 <path d="M41 254.5 V256.5 M36 256 L37 257 M46 256 L45 257" stroke="#333" stroke-width=".8"/>
 <!-- GCS -->
 <path d="M59 285.5 V275 M59 283 H66.5 M59 283 L55 286.5" stroke="#3a3a3a" stroke-width="1.8" fill="none"/>
 <path d="M56 276.5 L59 272.5 L62 276.5Z M65.5 280 L69 283 L65.5 286Z M54 284 L53.8 288 L57.5 287.5Z" fill="#3a3a3a"/>
 <!-- archive -->
 <path d="M53.8 294 L57 291.5 L60 292.5 L60 300 L63 305.5 L61 305.5 L53.8 299.5 Z" fill="#f2d820" stroke="#2a2a2a" stroke-width=".9"/>
 <path d="M58.5 294 L62 291.5 L68 294.5 L68.2 304 L64.5 305.5 L58.5 302 Z" fill="#4a8ad8" stroke="#1a2a5a" stroke-width=".9"/>
 <path d="M62 297 L68 295 M64.5 298.5 V305" stroke="#1a2a5a" stroke-width=".7"/>
 <rect x="63.5" y="300" width="3" height="3" fill="#e8e070"/>
 <!-- hydra -->
 <path d="M54 312 L58 309.5 L63 311.5 L63 314 L67.5 316 L67.5 322 L64.5 323.2 L54 317.5 Z" fill="#fff" stroke="#2a2a2a" stroke-width=".9"/>
 <path d="M57.5 310 L57.5 314.5 L54 312.5 M60 312 V316 M63 314 L60 316 L64.5 318.5 L67.5 316 M64.5 318.5 V323" stroke="#2a2a2a" stroke-width=".8" fill="none"/>
 <!-- part167 -->
 <path d="M54.5 335 L58 332.5 L58 329 L61.5 326.5 L66 328.5 L66 332 L68 333 L68 338 L64 341 L54.5 341 Z" fill="#2a6ac8" stroke="#0a1a40" stroke-width=".9"/>
 <path d="M58 329 L61.5 326.5 L66 328.5 L62.5 331Z M54.5 335 L58 332.5 L62.5 334.5 L68 333 L64 336Z" fill="#8ab8f0" stroke="#0a1a40" stroke-width=".7"/>
 <path d="M64 336 V341 M62.5 331 V334.5" stroke="#0a1a40" stroke-width=".7"/>
 <!-- part168 -->
 <path d="M54.5 353 L58 350.5 L58 347 L61.5 344.5 L66 346.5 L66 350 L68 351 L68 356 L64 358.5 L54.5 358.5 Z" fill="#b8bcc0" stroke="#707478" stroke-width=".9"/>
 <path d="M58 347 L61.5 344.5 L66 346.5 L62.5 349Z M54.5 353 L58 350.5 L62.5 352.5 L68 351 L64 354Z" fill="#e0e2e4" stroke="#707478" stroke-width=".7"/>
 <!-- constraints -->
 <rect x="53.5" y="371.5" width="7.5" height="6.5" rx="1.2" fill="#e2b89c" stroke="#3a2a20" stroke-width=".9"/>
 <path d="M55 371.5 V369.5 A2.2 2.2 0 0 1 59.5 369.5 V371.5" stroke="#3a2a20" fill="#fff" stroke-width=".9"/>
 <rect x="60.5" y="365.5" width="7.5" height="6.5" rx="1.2" fill="#e2b89c" stroke="#3a2a20" stroke-width=".9"/>
 <path d="M62 365.5 V363.5 A2.2 2.2 0 0 1 66.5 363.5 V365.5" stroke="#3a2a20" fill="#fff" stroke-width=".9"/>
 <circle cx="57.2" cy="375" r=".6" fill="#3a2a20"/><circle cx="64.2" cy="369" r=".6" fill="#3a2a20"/>
 <!-- cameras -->
 <circle cx="56.5" cy="383" r="2.4" fill="#555" stroke="#111" stroke-width="1"/><circle cx="62.5" cy="383" r="2.4" fill="#555" stroke="#111" stroke-width="1"/>
 <rect x="53.5" y="386" width="12.5" height="9.5" fill="#d8d8e8" stroke="#111" stroke-width="1"/>
 <rect x="55.5" y="389.5" width="8.5" height="4" fill="#8a88c0" stroke="#333" stroke-width=".5"/>
 <path d="M66 388 L68.5 387 V394.5 L66 393.5Z" fill="#fff" stroke="#111" stroke-width=".9"/>
 <!-- lights -->
 <path d="M58 403.5 L67.5 407 L66 411.5 L61 410.5 Z" fill="#f0d8b8" opacity=".85"/>
 <path d="M54 398.8 L59.5 403.5" stroke="#1a3a80" stroke-width="2.6"/>
 <path d="M54.5 398.5 L59 402.5" stroke="#6a9ae0" stroke-width="1"/>
 <path d="M59.5 403.5 L66.5 410.5" stroke="#6a5030" stroke-width=".8"/>
</svg>
<div class="t" style="left:74px;top:273px;font-size:11.8px">Global Coordinate System</div>
<div class="t" style="left:74px;top:291px;font-size:11.6px;font-weight:bold">Archive</div>
<div class="t" style="left:74px;top:309px;font-size:11.6px;transform:scaleX(0.919);transform-origin:0 0">HYDRA 4000 REV 2</div>
<div class="t" style="left:74px;top:327px;font-size:11.6px;transform:scaleX(0.955);transform-origin:0 0">Part167</div>
<div class="t" style="left:74px;top:345px;font-size:11.6px;transform:scaleX(0.955);transform-origin:0 0">Part168</div>
<div class="t" style="left:74px;top:363px;font-size:11.6px;transform:scaleX(1.015);transform-origin:0 0">Constraints</div>
<div class="t" style="left:74px;top:381px;font-size:11.6px;transform:scaleX(0.967);transform-origin:0 0">Cameras</div>
<div class="t" style="left:74px;top:399px;font-size:11.6px;transform:scaleX(1.025);transform-origin:0 0">Lights</div>

<!-- bottom panel tabs -->
<div class="a" style="left:30px;top:940px;width:55px;height:20px;background:linear-gradient(#fafbfc,#f2f4f6);border:1px solid #c8ccd0;border-top:none;border-radius:0 0 2px 2px"></div>
<svg style="left:0;top:0" width="240" height="965">
 <path d="M39.5 945 L36 952 L34 958 M39.5 945 L43 952 L45 958 M36 952 L38 958 M43 952 L41 958" stroke="#5a8ac0" fill="none"/>
 <rect x="38.5" y="943.5" width="2.5" height="2.5" fill="#fff" stroke="#5a8ac0" stroke-width=".7"/>
 <rect x="32.5" y="956.5" width="3" height="3" fill="#fff" stroke="#5a8ac0" stroke-width=".7"/><rect x="37.5" y="956.5" width="3" height="3" fill="#fff" stroke="#5a8ac0" stroke-width=".7"/><rect x="42.5" y="956.5" width="3" height="3" fill="#fff" stroke="#5a8ac0" stroke-width=".7"/>
 <circle cx="98" cy="947" r="4.5" fill="#cde0f8" stroke="#555" stroke-width="1.2"/>
 <path d="M101 950 L105 955" stroke="#d0a040" stroke-width="2.5"/>
 <rect x="158.5" y="943.5" width="11" height="14" fill="#fff" stroke="#333"/>
 <rect x="160.5" y="945.5" width="5" height="4" fill="#3a6ab0"/>
 <path d="M161 953 H167" stroke="#333"/>
</svg>
<div class="t" style="left:50px;top:943px;font-size:11.8px;color:#222;transform:scaleX(0.936);transform-origin:0 0">Scene</div>
<div class="t" style="left:110px;top:943px;font-size:11.8px;color:#333;transform:scaleX(0.917);transform-origin:0 0">Search</div>
<div class="t" style="left:174px;top:943px;font-size:11.8px;color:#333;transform:scaleX(0.978);transform-origin:0 0">Properties</div>

<!-- catalog browser -->
<div class="a" style="left:4px;top:965px;width:110px;height:22px;background:linear-gradient(#f7df78,#fcefb8 45%,#fdf6d6);border:1px solid #b9b49a;border-bottom:none"></div>
<svg style="left:8px;top:968px" width="16" height="16"><rect x="0.5" y="0.5" width="12" height="14" fill="#fff" stroke="#555"/><rect x="3" y="3.5" width="2" height="2" fill="#555"/><rect x="7" y="3.5" width="2" height="2" fill="#555"/><rect x="3" y="8.5" width="2" height="2" fill="#555"/><rect x="7" y="8.5" width="2" height="2" fill="#555"/><path d="M12.5 1 H15 V5" stroke="#555" fill="none"/></svg>
<div class="t" style="left:26px;top:969px;font-size:11.6px;color:#5e5a42">Catalog Browser</div>
<div class="a" id="viewport"></div>
<div class="a" style="left:389px;top:961px;width:1290px;height:1px;background:#f4f6f9"></div>
<!-- ===== 3D MODEL ===== -->
<svg style="left:0;top:0" width="1680" height="1011">
 <!-- top face -->
 <path d="M520 534 Q520 531 523 530 L730 460.5 L1441 518.8 Q1449.5 520 1449.5 527 L1312 614 Q1311 609 1306 608.9 Z" fill="#85858e"/>
 <path d="M520 534 Q520 531 523 530 L730 460.5 L1441 518.8 Q1449.5 520 1449.5 527" stroke="#16161c" stroke-width="1.3" fill="none"/>
 <!-- right side panel -->
 <path d="M1311.5 614 L1449.5 527 L1446 696.5 L1309 807 Z" fill="#7b7a84"/>
 <path d="M1306 608.9 L1442 519.5 Q1449.5 520 1449.5 527 L1312 614.5 Q1311 609 1306 608.9Z" fill="#9c9ba4"/>
 <path d="M1309 613 L1446 525" stroke="#b4b3bb" stroke-width="2" fill="none"/>
 <path d="M1306 608.9 L1442 519.5 M1312 615 L1448 527.5" stroke="#141418" stroke-width="1.1" fill="none"/>
 <path d="M1449.5 526 L1446 696.5 L1309 807" stroke="#1a1a22" stroke-width="1.3" fill="none"/>
 <path d="M1310 614 L1309 806" stroke="#b0b0b8" stroke-width="1.3"/>
 <path d="M1312 615 L1311 806" stroke="#18181c" stroke-width="1"/>
 <!-- left flange -->
 <path d="M520 534 L523.5 536 L532.5 700 L548.5 699.6 L530 706.6 Z" fill="#9a9aa2"/>
 <path d="M520 534 L529.5 706.6 L548.5 699.6" stroke="#141418" stroke-width="1.1" fill="none"/>
 <!-- front panel -->
 <path d="M523.5 537.5 L1307.5 612 L1307 795.5 L1271 792.5 L1271 788.8 L560 699.3 L533 696 Z" fill="#292929"/>
 <path d="M524 537 L532 694 Q533 696.5 537 697 L548 697.5" stroke="#0e0e0e" stroke-width="1.4" fill="none"/>
 <path d="M1307.5 614 L1307 795" stroke="#0e0e0e" stroke-width="1.4" fill="none"/>
 <!-- top edge lines & lip -->
 <path d="M521 530.6 L1306 608.9" stroke="#141418" stroke-width="1.2"/>
 <path d="M523 533.0 L1306 611.1" stroke="#7a7a82" stroke-width="1.2"/>
 <path d="M524 535.3 L1307 613.4" stroke="#0a0a0a" stroke-width="1.3"/>
 <path d="M553 538.8 L1271.5 610.4 L1271.5 615.9 L553 544.3 Z" fill="#333336"/>
 <path d="M524 536.9 L553 539.8" stroke="#3a3a3c" stroke-width="2"/>
 <path d="M553 544.6 L1271.5 616.2" stroke="#0a0a0a" stroke-width="1.2"/>
 <path d="M553 538.8 V544.8 M1271.5 610.4 V616.4" stroke="#111" stroke-width="1"/>
 <!-- bottom serrated edge -->
 <path d="M560 698.8 L1271 788.3 L1271 791.9 L560 702.4 Z" fill="#1c1d20"/>
 <path d="M548 696.9 L1271 788.0" stroke="#0c0c0c" stroke-width="1.4"/>
 <path d="M560 703.0 L1271 792.5" stroke="#0e1014" stroke-width="1.6" stroke-dasharray="2.2 1.6"/>
 <path d="M560 698.8 V703.8 M1271 787.3 V793.3 L1307 795" stroke="#0c0c0c" stroke-width="1.2" fill="none"/>
 <!-- holes -->
 <ellipse cx="552.7" cy="565.4" rx="3" ry="3.9" fill="#a0a0a0" stroke="#0a0a0a" stroke-width="1.4"/>
 <ellipse cx="558.6" cy="676.7" rx="3" ry="3.9" fill="#a0a0a0" stroke="#0a0a0a" stroke-width="1.4"/>
 <circle cx="1272" cy="639.7" r="4" fill="#1e1e1e" stroke="#050505" stroke-width="1.6"/>
 <circle cx="1272" cy="764.3" r="4" fill="#f0f0f2" stroke="#050505" stroke-width="1.2"/>
 <!-- ===== TRIBALL ===== -->
 <g fill="none" stroke="#30dcdc" stroke-width="1.3">
  <circle cx="1381.5" cy="747.5" r="100"/>
  <path d="M1352 654 L1368 642.6 L1415.6 648 L1399 660 Z"/>
  <path d="M1383.5 631 V650"/>
  <path d="M1472.2 741 L1487.4 729.3 L1487.4 773.4 L1472.2 791.5 Z"/>
  <path d="M1479.5 761 L1498 763"/>
  <path d="M1323.5 748.3 L1370 753.5 M1373.5 756 V802.2 L1323.5 797 V748.3"/>
  <path d="M1381 845 V862"/>
  <path d="M1269 734 L1288 737"/>
 </g>
 <path d="M1382 728 V768" stroke="#38c838" stroke-width="1.3"/>
 <path d="M1362 745 L1401 750.5" stroke="#d02828" stroke-width="1.3"/>
 <circle cx="1384" cy="627" r="4.3" fill="#c00000" stroke="#222" stroke-width="1"/>
 <circle cx="1503" cy="763" r="4.3" fill="#c00000" stroke="#222" stroke-width="1"/>
 <circle cx="1340" cy="782.7" r="4.3" fill="#c00000" stroke="#222" stroke-width="1"/>
 <circle cx="1382" cy="748" r="4.5" fill="#c00000" stroke="#222" stroke-width="1"/>
 <circle cx="1380" cy="867" r="4" fill="none" stroke="#d02020" stroke-width="1.3"/>
 <circle cx="1265" cy="733.6" r="4" fill="none" stroke="#a01818" stroke-width="1.3"/>
 <circle cx="1421" cy="716" r="4" fill="none" stroke="#b02020" stroke-width="1.3"/>
 <circle cx="1382" cy="724.8" r="4.2" fill="#30e0e8" stroke="#222" stroke-width="1"/>
 <circle cx="1381" cy="771.5" r="4" fill="none" stroke="#30d8d8" stroke-width="1.3"/>
 <circle cx="1359" cy="744.8" r="4" fill="none" stroke="#30d8d8" stroke-width="1.3"/>
 <circle cx="1405" cy="750.7" r="4.2" fill="#30e0e8" stroke="#222" stroke-width="1"/>
 <circle cx="1390" cy="740.8" r="4.2" fill="#f8f020" stroke="#222" stroke-width="1"/>
 <circle cx="1373" cy="754" r="4.2" fill="#f8f020" stroke="#222" stroke-width="1"/>
 <!-- axis triad -->
 <path d="M426.5 923 V909" stroke="#70e070" stroke-width="1.8"/>
 <path d="M423.5 915 Q424 908 426.5 906.5 Q429 908 429.8 915 Z" fill="#22a030"/>
 <path d="M409 923.5 L426 923" stroke="#d03848" stroke-width="2"/>
 <ellipse cx="416" cy="923" rx="4.5" ry="2.6" fill="#b81828"/>
 <ellipse cx="431.5" cy="921.5" rx="3.5" ry="2.4" fill="#3848e0" transform="rotate(-25 431.5 921.5)"/>
 <path d="M400.5 917 L405 923 M405 917 L400.5 923" stroke="#d85858" stroke-width="1"/>
 <path d="M424.5 893 L427 896.5 L429.5 893 M427 896.5 V899" stroke="#70e070" stroke-width="1.1" fill="none"/>
 <path d="M437.5 914.5 H442.5 L437.5 920 H442.5" stroke="#1020c0" stroke-width="1.4" fill="none"/>
</svg>

<!-- ===== LEFT VERTICAL TOOLBARS ===== -->
<div class="a" style="left:26px;top:207px;width:1px;height:733px;background:#a4a8ae"></div>
<div class="a" style="left:1px;top:371px;width:23px;height:141px;background:linear-gradient(90deg,#fbfcfd,#f0f2f5 80%,#dfe2e6);border-right:1px solid #989ca2;border-radius:2px"></div>
<div class="a" style="left:1px;top:501px;width:23px;height:12px;background:linear-gradient(90deg,#9ea2a8,#c8ccd1 60%,#dcdfe3)"></div>
<div class="a" style="left:1px;top:514px;width:23px;height:245px;background:linear-gradient(90deg,#fbfcfd,#f0f2f5 80%,#dfe2e6);border-right:1px solid #989ca2;border-radius:2px"></div>
<div class="a" style="left:1px;top:746px;width:23px;height:12px;background:linear-gradient(90deg,#9ea2a8,#c8ccd1 60%,#dcdfe3)"></div>
<div class="a" style="left:1px;top:756px;width:23px;height:207px;background:linear-gradient(90deg,#fbfcfd,#f0f2f5 80%,#dfe2e6);border-right:1px solid #989ca2;border-radius:2px"></div>
<div class="a" style="left:1px;top:951px;width:23px;height:12px;background:linear-gradient(90deg,#9ea2a8,#c8ccd1 60%,#dcdfe3)"></div>
<svg style="left:0;top:0" width="30" height="970">
 <g fill="#a8acb2"><rect x="6" y="376" width="1" height="1.5"/><rect x="9" y="376" width="1" height="1.5"/><rect x="12" y="376" width="1" height="1.5"/><rect x="15" y="376" width="1" height="1.5"/>
 <rect x="6" y="517" width="1" height="1.5"/><rect x="9" y="517" width="1" height="1.5"/><rect x="12" y="517" width="1" height="1.5"/><rect x="15" y="517" width="1" height="1.5"/>
 <rect x="6" y="759" width="1" height="1.5"/><rect x="9" y="759" width="1" height="1.5"/><rect x="12" y="759" width="1" height="1.5"/><rect x="15" y="759" width="1" height="1.5"/></g>
 <path d="M17 504 V510 L20 507Z M16 504 V510" stroke="#666" stroke-width=".8" fill="#888"/>
 <path d="M17 749 V755 L20 752Z M16 749 V755" stroke="#666" stroke-width=".8" fill="#888"/>
 <path d="M17 954 V960 L20 957Z M16 954 V960" stroke="#666" stroke-width=".8" fill="#888"/>
 <!-- tb1 -->
 <path d="M5 391 H10 M7.5 388.5 V393.5 M5 396 H10" stroke="#e02020" stroke-width="1.2"/>
 <rect x="11.5" y="388.5" width="8" height="9" fill="#1a2a5a"/><rect x="10" y="390" width="8" height="8" fill="#f5d020" stroke="#444" stroke-width=".6"/>
 <rect x="10.5" y="407.5" width="10" height="9" fill="#d0d0d0" stroke="#8a8a8a" stroke-width=".9"/>
 <path d="M8.5 411 H13 L16 414 V418 L13 421 H8.5 L5.5 418 V414Z" fill="#bdbdbd" stroke="#8a8a8a" stroke-width=".9" opacity=".92"/>
 <path d="M10.5 411 V416.5 H16" fill="none" stroke="#9a9a9a" stroke-width=".7"/>
 <rect x="10.5" y="437.5" width="10" height="9" fill="#d0d0d0" stroke="#8a8a8a" stroke-width=".9"/>
 <path d="M8.5 441 H13 L16 444 V448 L13 451 H8.5 L5.5 448 V444Z" fill="#bdbdbd" stroke="#8a8a8a" stroke-width=".9" opacity=".92"/>
 <path d="M10.5 441 V446.5 H16" fill="none" stroke="#9a9a9a" stroke-width=".7"/>
 <rect x="10.5" y="459.5" width="10" height="9" fill="#d0d0d0" stroke="#8a8a8a" stroke-width=".9"/>
 <path d="M8.5 463 H13 L16 466 V470 L13 473 H8.5 L5.5 470 V466Z" fill="#bdbdbd" stroke="#8a8a8a" stroke-width=".9" opacity=".92"/>
 <path d="M10.5 463 V468.5 H16" fill="none" stroke="#9a9a9a" stroke-width=".7"/>
 <rect x="10.5" y="481.5" width="10" height="9" fill="#d0d0d0" stroke="#8a8a8a" stroke-width=".9"/>
 <path d="M8.5 485 H13 L16 488 V492 L13 495 H8.5 L5.5 492 V488Z" fill="#bdbdbd" stroke="#8a8a8a" stroke-width=".9" opacity=".92"/>
 <path d="M10.5 485 V490.5 H16" fill="none" stroke="#9a9a9a" stroke-width=".7"/>
 <path d="M6 429.5 H20" stroke="#9a9a9a"/>
 <!-- tb2 cubes -->
 <defs><linearGradient id="cg" x1="0" y1="0" x2="1" y2="1"><stop offset="0" stop-color="#f4f8fd"/><stop offset="1" stop-color="#a6c2e6"/></linearGradient></defs>
 <path d="M5.5 531.5 L10.5 526.5 h10.5 v10.5 L16.0 542.0 h-10.5Z" fill="url(#cg)"/>
 <path d="M5.5 531.5 h10.5 v10.5 h-10.5Z" fill="#3464a4"/>
 <path d="M10.5 526.5 h10.5 v10.5 h-10.5Z M5.5 531.5 h10.5 v10.5 h-10.5Z M5.5 531.5 L10.5 526.5 M16.0 531.5 L21.0 526.5 M16.0 542.0 L21.0 537.0 M5.5 542.0 L10.5 537.0" fill="none" stroke="#4a5a74" stroke-width=".8"/>
 <path d="M5.5 553.5 L10.5 548.5 h10.5 v10.5 L16.0 564.0 h-10.5Z" fill="url(#cg)"/>
 <path d="M5.5 553.5 L10.5 548.5 h10.5 L16.0 553.5Z" fill="#3464a4"/>
 <path d="M10.5 548.5 h10.5 v10.5 h-10.5Z M5.5 553.5 h10.5 v10.5 h-10.5Z M5.5 553.5 L10.5 548.5 M16.0 553.5 L21.0 548.5 M16.0 564.0 L21.0 559.0 M5.5 564.0 L10.5 559.0" fill="none" stroke="#4a5a74" stroke-width=".8"/>
 <path d="M5.5 575.5 L10.5 570.5 h10.5 v10.5 L16.0 586.0 h-10.5Z" fill="url(#cg)"/>
 <path d="M5.5 575.5 L10.5 570.5 v10.5 L5.5 586.0Z" fill="#3464a4"/>
 <path d="M10.5 570.5 h10.5 v10.5 h-10.5Z M5.5 575.5 h10.5 v10.5 h-10.5Z M5.5 575.5 L10.5 570.5 M16.0 575.5 L21.0 570.5 M16.0 586.0 L21.0 581.0 M5.5 586.0 L10.5 581.0" fill="none" stroke="#4a5a74" stroke-width=".8"/>
 <path d="M5.5 597.5 L10.5 592.5 h10.5 v10.5 L16.0 608.0 h-10.5Z" fill="url(#cg)"/>
 <path d="M16.0 597.5 L21.0 592.5 v10.5 L16.0 608.0Z" fill="#3464a4"/>
 <path d="M10.5 592.5 h10.5 v10.5 h-10.5Z M5.5 597.5 h10.5 v10.5 h-10.5Z M5.5 597.5 L10.5 592.5 M16.0 597.5 L21.0 592.5 M16.0 608.0 L21.0 603.0 M5.5 608.0 L10.5 603.0" fill="none" stroke="#4a5a74" stroke-width=".8"/>
 <path d="M5.5 619.5 L10.5 614.5 h10.5 v10.5 L16.0 630.0 h-10.5Z" fill="url(#cg)"/>
 <path d="M10.5 614.5 h10.5 v10.5 h-10.5Z" fill="#3464a4"/>
 <path d="M10.5 614.5 h10.5 v10.5 h-10.5Z M5.5 619.5 h10.5 v10.5 h-10.5Z M5.5 619.5 L10.5 614.5 M16.0 619.5 L21.0 614.5 M16.0 630.0 L21.0 625.0 M5.5 630.0 L10.5 625.0" fill="none" stroke="#4a5a74" stroke-width=".8"/>
 <path d="M5.5 641.5 L10.5 636.5 h10.5 v10.5 L16.0 652.0 h-10.5Z" fill="url(#cg)"/>
 <path d="M5.5 652.0 L10.5 647.0 h10.5 L16.0 652.0Z" fill="#3464a4"/>
 <path d="M10.5 636.5 h10.5 v10.5 h-10.5Z M5.5 641.5 h10.5 v10.5 h-10.5Z M5.5 641.5 L10.5 636.5 M16.0 641.5 L21.0 636.5 M16.0 652.0 L21.0 647.0 M5.5 652.0 L10.5 647.0" fill="none" stroke="#4a5a74" stroke-width=".8"/>
 <path d="M7.3 660.5 L10.7 663.3 V672.7 L7.3 670.0Z" fill="#2e5a98" stroke="#1a2a4a" stroke-width=".8"/>
 <path d="M7.3 660.5 H14 L20 663.3 H10.7Z" fill="#2e5a98" stroke="#1a2a4a" stroke-width=".8"/>
 <path d="M10.7 663.3 H20 V672.7 H10.7Z" fill="#4a7cc0" stroke="#1a2a4a" stroke-width=".8"/>
 <path d="M7.3 682.5 L10.7 685.3 V694.7 L7.3 692.0Z" fill="#fff" stroke="#1a2a4a" stroke-width=".8"/>
 <path d="M7.3 682.5 H14 L20 685.3 H10.7Z" fill="#2e5a98" stroke="#1a2a4a" stroke-width=".8"/>
 <path d="M10.7 685.3 H20 V694.7 H10.7Z" fill="#4a7cc0" stroke="#1a2a4a" stroke-width=".8"/>
 <path d="M7.3 704.5 L10.7 707.3 V716.7 L7.3 714.0Z" fill="#2e5a98" stroke="#1a2a4a" stroke-width=".8"/>
 <path d="M7.3 704.5 H14 L20 707.3 H10.7Z" fill="#fff" stroke="#1a2a4a" stroke-width=".8"/>
 <path d="M10.7 707.3 H20 V716.7 H10.7Z" fill="#4a7cc0" stroke="#1a2a4a" stroke-width=".8"/>
 <path d="M7.3 726.5 L10.7 729.3 V738.7 L7.3 736.0Z" fill="#fff" stroke="#1a2a4a" stroke-width=".8"/>
 <path d="M7.3 726.5 H14 L20 729.3 H10.7Z" fill="#fff" stroke="#1a2a4a" stroke-width=".8"/>
 <path d="M10.7 729.3 H20 V738.7 H10.7Z" fill="#4a7cc0" stroke="#1a2a4a" stroke-width=".8"/>
 <!-- tb3 -->
 <path d="M6 773 L18 783 M4 776 L8 770 M16 786 L20 780" stroke="#222" stroke-width="1.1"/>
 <path d="M5 795 H20 M5 791 V799 M20 791 V799" stroke="#e02020" stroke-width="1.5"/>
 <ellipse cx="14" cy="801" rx="4.5" ry="3" fill="#2060c0" stroke="#fff" stroke-width=".8"/>
 <path d="M7 814 V829 M4 814 H10 M4 829 H10" stroke="#e02020" stroke-width="1.5"/>
 <ellipse cx="16" cy="822" rx="4.5" ry="3" fill="#2060c0" stroke="#fff" stroke-width=".8"/>
 <path d="M4 850 H20 M4 850 L16 838 M12 841 A7 7 0 0 1 17 849" stroke="#222" stroke-width="1" fill="none"/>
 <circle cx="12.5" cy="865" r="7" fill="#eee" stroke="#333" stroke-width="1.1"/><path d="M12.5 865 L8.5 861 M8.5 861 V863.5 M8.5 861 H11" stroke="#222"/>
 <circle cx="12.5" cy="887" r="7.5" fill="#eee" stroke="#333" stroke-width="1.1"/><path d="M7.5 882 L17.5 892 M7.5 882 V885 M7.5 882 H10.5 M17.5 892 V889 M17.5 892 H14.5" stroke="#222"/>
 <path d="M5 901.5 H20" stroke="#9a9a9a"/>
 <path d="M6 924 L8 914 H13" stroke="#1a3a7a" stroke-width="1.8" fill="none"/><text x="13" y="918" font-size="8" font-weight="bold" fill="#1a3a9a" font-family="Liberation Sans">A</text>
 <rect x="8" y="931" width="9" height="16" fill="#333"/><path d="M8 934 H17 M8 937 H17 M8 940 H17" stroke="#ccc" stroke-width=".8"/>
</svg>
<div class="a" id="status"></div>
<div class="t" style="left:3px;top:991px;font-size:12px;color:#333;transform:scaleX(0.986);transform-origin:0 0">Move cursor to TriBall.</div>
<div class="a" style="left:900px;top:988px;width:1px;height:21px;background:#a0a4a9"></div>
<div class="t" style="left:916px;top:991px;font-size:11.2px;color:#333;transform:scaleX(0.980);transform-origin:0 0">View size: 1290 x &nbsp;755</div>
<div class="t" style="left:1054px;top:991px;font-size:12px;color:#333;transform:scaleX(0.985);transform-origin:0 0">Units: in, deg</div>
<svg style="left:0;top:0" width="1680" height="1011">
 <circle cx="1152" cy="997" r="5" fill="#fff" stroke="#333" stroke-width="1.3"/><path d="M1155.5 1000.5 L1159 1004" stroke="#333" stroke-width="2"/><rect x="1150" y="995" width="4" height="4" fill="none" stroke="#333" stroke-width=".8"/>
 <circle cx="1175" cy="997" r="5" fill="#fff" stroke="#333" stroke-width="1.3"/><path d="M1178.5 1000.5 L1182 1004" stroke="#333" stroke-width="2"/>
 <path d="M1193 997.5 H1198 L1195.5 1000.5Z" fill="#777"/>
 <path d="M1204 996 L1207 993 H1215 V1001 L1212 1004 H1204Z" fill="#f5d020" stroke="#222" stroke-width=".9"/><path d="M1214 991 V997 M1211 994 H1217" stroke="#e02020" stroke-width="1.3"/>
 <path d="M1227 997.5 H1232 L1229.5 1000.5Z" fill="#777"/>
 <path d="M1240 996 L1243 992 H1255 V1002 L1252 1006 H1240Z" fill="#3a78c8" stroke="#1a3a6a" stroke-width=".9"/><path d="M1240 996 L1243 992 H1255 L1252 996Z" fill="#9cc4ec" stroke="#1a3a6a" stroke-width=".7"/>
 <path d="M1262 997.5 H1267 L1264.5 1000.5Z" fill="#777"/>
 <path d="M1275 998 L1280 994 V1002Z" fill="#3a6ab0"/><rect x="1281" y="996" width="7" height="8" fill="#fff" stroke="#333" stroke-width=".8"/><circle cx="1284" cy="994" r="2.5" fill="none" stroke="#3a6ab0"/>
 <path d="M1297 997.5 H1302 L1299.5 1000.5Z" fill="#777"/>
 <rect x="1305.5" y="988.5" width="21" height="20" rx="2" fill="#fbd873" stroke="#e0b048"/>
 <path d="M1309 1004 L1313 994 L1323 991 L1319 1001Z" fill="#4a88d0" stroke="#1a3a6a" stroke-width=".9"/>
 <circle cx="1337" cy="1001" r="3.5" fill="none" stroke="#1a2a5a" stroke-width="1.3"/><circle cx="1345" cy="1001" r="3.5" fill="none" stroke="#1a2a5a" stroke-width="1.3"/><path d="M1334 998 L1338 991 M1342 998 L1346 991" stroke="#1a2a5a" stroke-width="1.2"/>
 <path d="M1350 997.5 H1355 L1352.5 1000.5Z" fill="#777"/>
 <rect x="1361.5" y="988.5" width="27" height="20" rx="2" fill="#fbd873" stroke="#e0b048"/>
 <path d="M1366 996 L1369 992 H1380 V1002 L1377 1006 H1366Z" fill="#a8c8ee" stroke="#1a3a6a" stroke-width=".9"/><path d="M1366 996 H1377 V1006 M1377 996 L1380 992" stroke="#1a3a6a" stroke-width=".8" fill="none"/>
 <path d="M1383 998 H1387 L1385 1001Z" fill="#555"/>
 <path d="M1398 998 L1402 993 H1412 V1002 L1409 1006 H1398Z" fill="#2e5cb8" stroke="#112" stroke-width=".9"/><path d="M1402 993 L1406 990 H1412 V993" fill="#6a9ae0" stroke="#112" stroke-width=".8"/>
 <path d="M1416 997.5 H1421 L1418.5 1000.5Z" fill="#777"/>
 <path d="M1430 1000 C1430 995 1434 994 1440 995 L1440 992 L1444 996 L1440 1000 L1440 998 C1436 998 1433 999 1433 1002Z" fill="#aaa"/>
 <path d="M1437 997 V1006 L1439.5 1003.5 L1442 1007 L1443 1006 L1441 1003 L1444 1003Z" fill="#fff" stroke="#aaa" stroke-width=".8"/>
 <path d="M1459.5 991.5 V1004 L1462.5 1001 L1465.5 1006.5 L1467.5 1005.5 L1464.5 1000 L1468.5 1000Z" fill="#fff" stroke="#111" stroke-width="1.1"/>
 <rect x="1480.5" y="993.5" width="6" height="5" fill="#eee" stroke="#ccc" stroke-width=".8"/>
 <path d="M1485.5 996 V1005 L1487.5 1003 L1490 1007 L1491 1006 L1489 1002.5 L1492 1002.5Z" fill="#fff" stroke="#999" stroke-width=".8"/>
</svg>
<div class="a" style="left:1500px;top:990px;width:86px;height:20px;background:#fff"></div>
<div class="t" style="left:1502px;top:993px;font-size:12px;color:#222;transform:scaleX(0.981);transform-origin:0 0">Any</div>
<div class="a" style="left:1578px;top:998px;border-left:3px solid transparent;border-right:3px solid transparent;border-top:3px solid #777"></div>
<div class="a" style="left:1589px;top:990px;width:65px;height:20px;background:#fff"></div>
<div class="t" style="left:1592px;top:993px;font-size:12px;color:#222">uk hydra</div>
<div class="a" style="left:1644px;top:998px;border-left:3px solid transparent;border-right:3px solid transparent;border-top:3px solid #777"></div>
<svg style="left:1657px;top:991px" width="20" height="18"><rect x="6.5" y="1.5" width="6" height="4" fill="#c01818" stroke="#1a2a6a" stroke-width=".6"/><path d="M9.5 5.5 V8.5 M4 10.5 V8.5 H15 V10.5" stroke="#1a3a8a" fill="none"/><rect x="1.5" y="10.5" width="6" height="4.5" fill="#9cc4f0" stroke="#1a3a9a"/><rect x="11.5" y="10.5" width="6" height="4.5" fill="#f5e880" stroke="#1a3a9a"/></svg>
<div class="a" style="left:0;top:1009px;width:1680px;height:2px;background:#6a6d72"></div>
</body></html>
